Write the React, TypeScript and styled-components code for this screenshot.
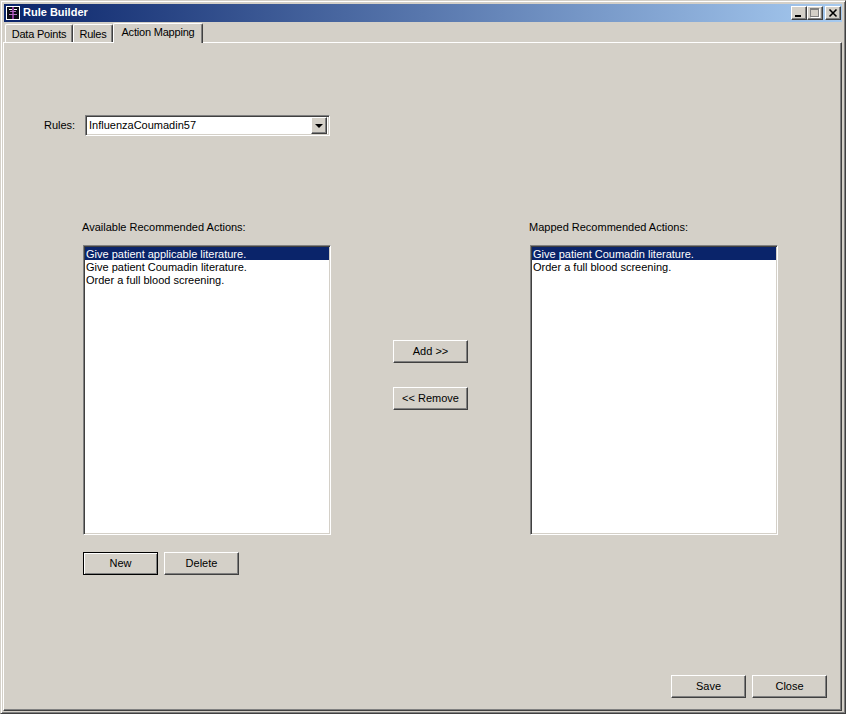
import React from 'react'
import styled, { createGlobalStyle } from 'styled-components'

const GlobalStyle = createGlobalStyle`
  html, body {
    margin: 0;
    padding: 0;
    background: #d4d0c8;
  }
  body {
    font-family: "Liberation Sans", Arial, sans-serif;
    font-size: 11px;
    color: #000;
  }
`

const Window = styled.div`
  width: 846px;
  height: 714px;
  box-sizing: border-box;
  display: flex;
  flex-direction: column;
  background: #d4d0c8;
  padding: 3px 3px 2px 2px;
  border: 1px solid;
  border-color: #d4d0c8 #404040 #404040 #d4d0c8;
  box-shadow: inset 1px 1px 0 #fff, inset -1px -1px 0 #808080;
`

const TitleBar = styled.div`
  height: 18px;
  flex: none;
  display: flex;
  align-items: center;
  margin-left: 1px;
  padding: 0 1px 0 2px;
  background: linear-gradient(90deg, #0a246a 0%, #a6caf0 100%);
`

const AppIcon = styled.svg`
  width: 14px;
  height: 14px;
  flex: none;
`

const Caption = styled.div`
  margin-left: 3px;
  padding-bottom: 2px;
  color: #fff;
  font-size: 11px;
  font-weight: 700;
  flex: 1;
`

const WinButton = styled.div<{ $gap?: number }>`
  width: 16px;
  height: 14px;
  margin-left: ${(p) => p.$gap ?? 0}px;
  box-sizing: border-box;
  background: #d4d0c8;
  border: 1px solid;
  border-color: #fff #404040 #404040 #fff;
  box-shadow: inset -1px -1px 0 #808080;
  display: flex;
  align-items: center;
  justify-content: center;
`

const WinGlyph = styled.svg`
  width: 10px;
  height: 10px;
`

const TabStrip = styled.div`
  flex: none;
  height: 20px;
  display: flex;
  align-items: flex-end;
  padding-left: 2px;
  position: relative;
  z-index: 1;
`

const Tab = styled.div<{ $active?: boolean; $width: number }>`
  box-sizing: border-box;
  width: ${(p) => p.$width}px;
  height: ${(p) => (p.$active ? 20 : 18)}px;
  margin-bottom: ${(p) => (p.$active ? -1 : 0)}px;
  text-align: center;
  letter-spacing: -0.2px;
  line-height: ${(p) => (p.$active ? 17 : 19)}px;
  background: #d4d0c8;
  border-top: 1px solid #fff;
  border-left: 1px solid #fff;
  border-right: 1px solid #404040;
  border-radius: 2px 2px 0 0;
  box-shadow: inset -1px 0 0 #808080;
`

const Panel = styled.div`
  flex: 1;
  box-sizing: border-box;
  border: 1px solid;
  border-color: #fff #404040 #404040 #fff;
  box-shadow: inset -1px -1px 0 #808080;
  display: flex;
  flex-direction: column;
  padding: 72px 14px 12px 40px;
`

const RulesRow = styled.div`
  display: flex;
  align-items: center;
  height: 21px;
`

const FieldLabel = styled.label`
  width: 41px;
  flex: none;
  padding-bottom: 2px;
  color: #000;
`

const Combo = styled.div`
  box-sizing: border-box;
  width: 245px;
  height: 21px;
  background: #fff;
  border: 1px solid;
  border-color: #808080 #fff #fff #808080;
  box-shadow: inset 1px 1px 0 #404040, inset -1px -1px 0 #d4d0c8;
  display: flex;
  align-items: center;
  padding: 2px;
`

const ComboText = styled.div`
  flex: 1;
  padding: 0 0 2px 1px;
`

const ComboArrow = styled.div`
  box-sizing: border-box;
  width: 16px;
  height: 17px;
  background: #d4d0c8;
  border: 1px solid;
  border-color: #fff #404040 #404040 #fff;
  box-shadow: inset -1px -1px 0 #808080;
  display: flex;
  align-items: center;
  justify-content: center;
  &::after {
    content: '';
    border-style: solid;
    border-width: 4px 4px 0;
    border-color: #000 transparent transparent;
  }
`

const Columns = styled.div`
  margin: 85px 0 0 39px;
  display: grid;
  grid-template-columns: 248px 199px 248px;
`

const ListColumn = styled.div`
  display: flex;
  flex-direction: column;
`

const ListLabel = styled.div`
  height: 24px;
  line-height: 12px;
  margin-left: -1px;
`

const ListBox = styled.div`
  box-sizing: border-box;
  height: 290px;
  background: #fff;
  border: 1px solid;
  border-color: #808080 #fff #fff #808080;
  box-shadow: inset 1px 1px 0 #404040, inset -1px -1px 0 #d4d0c8;
  padding: 1px;
`

const ListRow = styled.div<{ $selected?: boolean }>`
  height: 13px;
  line-height: 15px;
  padding-left: 1px;
  white-space: nowrap;
  color: ${(p) => (p.$selected ? '#fff' : '#000')};
  background: ${(p) => (p.$selected ? '#0a246a' : 'transparent')};
`

const ActionColumn = styled.div`
  display: flex;
  flex-direction: column;
  align-items: center;
  gap: 24px;
  padding-top: 119px;
`

const ButtonRow = styled.div`
  display: flex;
  gap: 6px;
  margin-top: 17px;
`

const Button = styled.button<{ $default?: boolean }>`
  box-sizing: border-box;
  width: 75px;
  height: 23px;
  padding: 0 0 2px;
  font: inherit;
  color: #000;
  background: #d4d0c8;
  border: 1px solid;
  border-color: ${(p) => (p.$default ? '#000' : '#fff #404040 #404040 #fff')};
  box-shadow: ${(p) =>
    p.$default
      ? 'inset 1px 1px 0 #fff, inset -1px -1px 0 #808080'
      : 'inset -1px -1px 0 #808080'};
`

const Footer = styled.div`
  margin-top: auto;
  display: flex;
  justify-content: flex-end;
  gap: 6px;
`

const available = [
  'Give patient applicable literature.',
  'Give patient Coumadin literature.',
  'Order a full blood screening.',
]
const mapped = ['Give patient Coumadin literature.', 'Order a full blood screening.']

export default function App() {
  return (
    <>
      <GlobalStyle />
      <Window>
        <TitleBar>
          <AppIcon viewBox="0 0 14 14">
            <rect width="14" height="14" fill="#fff" />
            <rect x="1" y="1" width="12" height="12" fill="#0c0c14" />
            <path d="M3 3h8v1H3z" fill="#fff" />
            <path d="M6 1h2v12H6z" fill="#8a3a96" />
            <path d="M4 5h6v1H4zM3 8h8v1H3z" fill="#b070c0" />
          </AppIcon>
          <Caption>Rule Builder</Caption>
          <WinButton>
            <WinGlyph viewBox="0 0 10 10">
              <path d="M1 7h6v2H1z" fill="#000" />
            </WinGlyph>
          </WinButton>
          <WinButton>
            <WinGlyph viewBox="0 0 10 10">
              <path d="M0 0h9v9H0zM1 2v6h7V2z" fill="#808080" fillRule="evenodd" />
              <path d="M9 1h1v9H1V9h8z" fill="#fff" />
            </WinGlyph>
          </WinButton>
          <WinButton $gap={2}>
            <WinGlyph viewBox="0 0 10 10">
              <path d="M1.5 1.5l7 7M8.5 1.5l-7 7" stroke="#000" strokeWidth="1.6" />
            </WinGlyph>
          </WinButton>
        </TitleBar>
        <TabStrip>
          <Tab $width={68}>Data Points</Tab>
          <Tab $width={40}>Rules</Tab>
          <Tab $width={90} $active>
            Action Mapping
          </Tab>
        </TabStrip>
        <Panel>
          <RulesRow>
            <FieldLabel>Rules:</FieldLabel>
            <Combo>
              <ComboText>InfluenzaCoumadin57</ComboText>
              <ComboArrow />
            </Combo>
          </RulesRow>
          <Columns>
            <ListColumn>
              <ListLabel>Available Recommended Actions:</ListLabel>
              <ListBox>
                {available.map((a, i) => (
                  <ListRow key={a} $selected={i === 0}>
                    {a}
                  </ListRow>
                ))}
              </ListBox>
              <ButtonRow>
                <Button $default>New</Button>
                <Button>Delete</Button>
              </ButtonRow>
            </ListColumn>
            <ActionColumn>
              <Button>Add &gt;&gt;</Button>
              <Button>&lt;&lt; Remove</Button>
            </ActionColumn>
            <ListColumn>
              <ListLabel>Mapped Recommended Actions:</ListLabel>
              <ListBox>
                {mapped.map((a, i) => (
                  <ListRow key={a} $selected={i === 0}>
                    {a}
                  </ListRow>
                ))}
              </ListBox>
            </ListColumn>
          </Columns>
          <Footer>
            <Button>Save</Button>
            <Button>Close</Button>
          </Footer>
        </Panel>
      </Window>
    </>
  )
}
